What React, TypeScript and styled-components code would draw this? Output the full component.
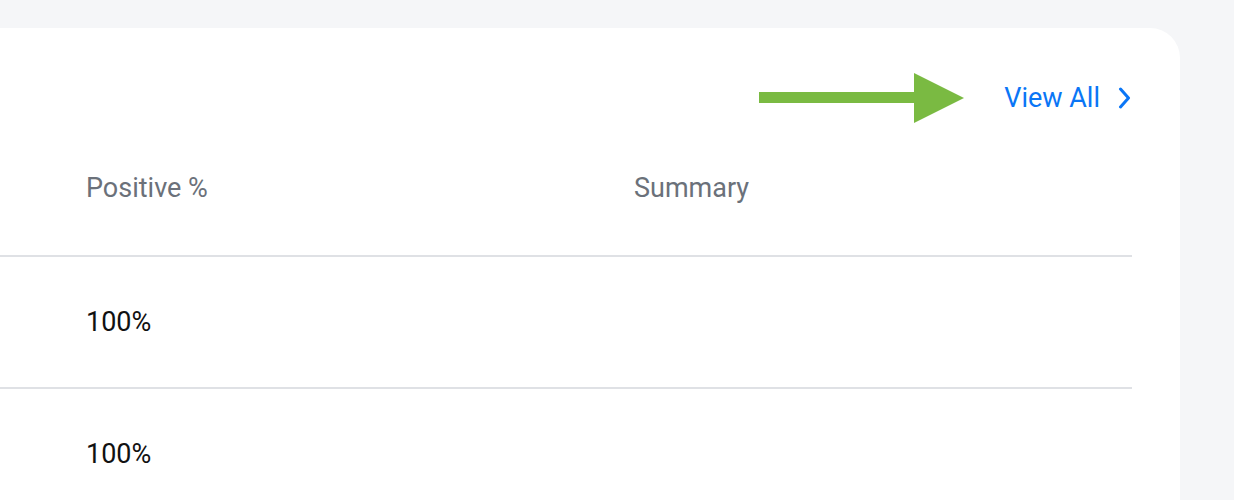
import React from 'react';
import styled, { createGlobalStyle } from 'styled-components';

const GlobalStyle = createGlobalStyle`
  html, body {
    margin: 0;
    padding: 0;
    background: #f5f6f8;
    font-family: Roboto, "Liberation Sans", Arial, sans-serif;
    overflow: hidden;
  }
`;

const Page = styled.div`
  padding: 28px 54px 0 0;
  height: 500px;
  box-sizing: border-box;
`;

const Card = styled.div`
  background: #fff;
  border-radius: 0 30px 0 0;
  height: 100%;
  padding-right: 48px;
`;

const Toolbar = styled.div`
  display: flex;
  align-items: center;
  justify-content: flex-end;
  padding-top: 52px;
  height: 36px;
`;

const ViewAll = styled.a`
  display: flex;
  align-items: center;
  gap: 18px;
  margin-left: 40px;
  color: #0a76f6;
  font-size: 27px;
  line-height: 36px;
  text-decoration: none;
  cursor: pointer;
`;

const Row = styled.div`
  display: grid;
  grid-template-columns: 548px 1fr;
  align-items: center;
  padding-left: 86px;
  height: 130px;
  border-bottom: 2px solid #dfe1e5;
`;

const HeaderRow = styled(Row)`
  align-items: start;
  height: auto;
  padding-top: 54px;
  padding-bottom: 49px;
`;

const HeadCell = styled.div`
  color: #6b717a;
  font-size: 27px;
  line-height: 36px;
`;

const Cell = styled.div`
  color: #111;
  font-size: 27px;
  line-height: 36px;
`;

const Arrow = () => (
  <svg width="205" height="50" viewBox="0 0 205 50">
    <rect x="0" y="19" width="156" height="11" fill="#7aba42" />
    <polygon points="155,0 205,25 155,50" fill="#7aba42" />
  </svg>
);

const Chevron = () => (
  <svg width="14" height="22" viewBox="0 0 14 22">
    <polyline points="2.5,2 10.5,11 2.5,20" fill="none" stroke="#0a76f6" strokeWidth="3" strokeLinecap="round" strokeLinejoin="round" />
  </svg>
);

const rows = ['100%', '100%'];

const App = () => (
  <Page>
    <GlobalStyle />
    <Card>
      <Toolbar>
        <Arrow />
        <ViewAll>
          View All
          <Chevron />
        </ViewAll>
      </Toolbar>
      <HeaderRow>
        <HeadCell>Positive %</HeadCell>
        <HeadCell>Summary</HeadCell>
      </HeaderRow>
      {rows.map((r, i) => (
        <Row key={i}>
          <Cell>{r}</Cell>
          <Cell />
        </Row>
      ))}
    </Card>
  </Page>
);

export default App;
